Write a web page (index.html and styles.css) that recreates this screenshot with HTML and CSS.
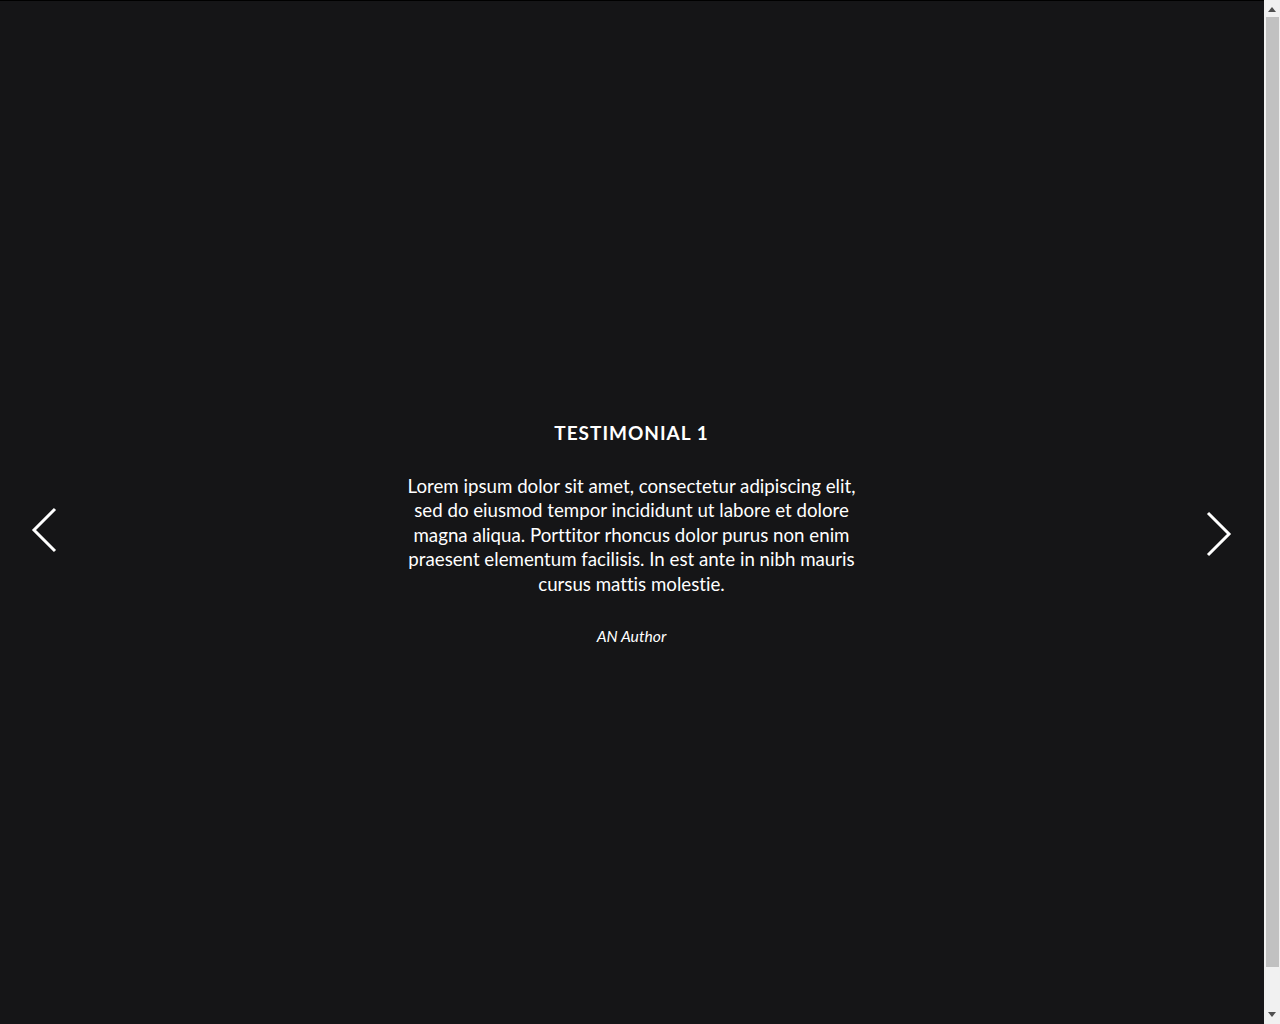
FILE: index.html
```html
<!DOCTYPE html>
<html>
<head>
<meta charset="utf-8">
<link rel="stylesheet" href="styles.css">
</head>
<body>
<div class="page">
  <div class="topline"></div>
  <section class="slider">
    <button class="arrow prev" aria-label="Previous">
      <svg width="30" height="48" viewBox="0 0 30 48"><polyline points="25,2 4,23 25,44" fill="none" stroke="#fff" stroke-width="3"/></svg>
    </button>
    <div class="slide">
      <h2 class="title">Testimonial 1</h2>
      <p class="quote">Lorem ipsum dolor sit amet, consectetur adipiscing elit, sed do eiusmod tempor incididunt ut labore et dolore magna aliqua. Porttitor rhoncus dolor purus non enim praesent elementum facilisis. In est ante in nibh mauris cursus mattis molestie.</p>
      <p class="author">AN Author</p>
    </div>
    <button class="arrow next" aria-label="Next">
      <svg width="30" height="48" viewBox="0 0 30 48"><polyline points="5,2 26,23 5,44" fill="none" stroke="#fff" stroke-width="3"/></svg>
    </button>
  </section>
</div>
<div class="scrollbar" aria-hidden="true">
  <div class="sb-btn"><svg width="16" height="17" viewBox="0 0 16 17"><polygon points="4,12 8,7 12,12" fill="#505050"/></svg></div>
  <div class="sb-track"><div class="sb-thumb"></div></div>
  <div class="sb-btn"><svg width="16" height="17" viewBox="0 0 16 17"><polygon points="4,5 8,10 12,5" fill="#505050"/></svg></div>
</div>
</body>
</html>
```
FILE: styles.css
```css
html, body {
  margin: 0;
  padding: 0;
  background: #151517;
}
body {
  font-family: Lato, "Liberation Sans", sans-serif;
  color: #fff;
}
.page {
  margin-right: 16px;
}
.topline {
  height: 1px;
  background: #000;
}
.slider {
  height: 1065px;
  display: flex;
  align-items: center;
  justify-content: space-between;
  padding: 0 30px;
  box-sizing: border-box;
}
.arrow {
  background: none;
  border: 0;
  padding: 0;
  width: 30px;
  height: 48px;
  display: flex;
  cursor: pointer;
}
.prev { margin-top: -5px; }
.next { margin-top: 2px; margin-right: 1px; }
.slide {
  width: 470px;
  text-align: center;
}
.title {
  margin: 0 0 29px;
  font-size: 19px;
  font-weight: 700;
  letter-spacing: 1px;
  text-transform: uppercase;
  line-height: 24px;
}
.quote {
  margin: 0 0 30px;
  font-size: 18.7px;
  line-height: 24.5px;
  font-variant-ligatures: none;
}
.author {
  margin: 0;
  font-size: 15.7px;
  font-style: italic;
  line-height: 20px;
}
.scrollbar {
  position: fixed;
  top: 0;
  right: 0;
  width: 16px;
  height: 100vh;
  background: #f1f1f1;
  display: flex;
  flex-direction: column;
}
.sb-btn {
  height: 17px;
  flex: none;
}
.sb-btn svg { display: block; }
.sb-track {
  flex: 1;
  padding: 0 1px 0 2px;
}
.sb-thumb {
  height: 950px;
  background: #c1c1c1;
}
```
